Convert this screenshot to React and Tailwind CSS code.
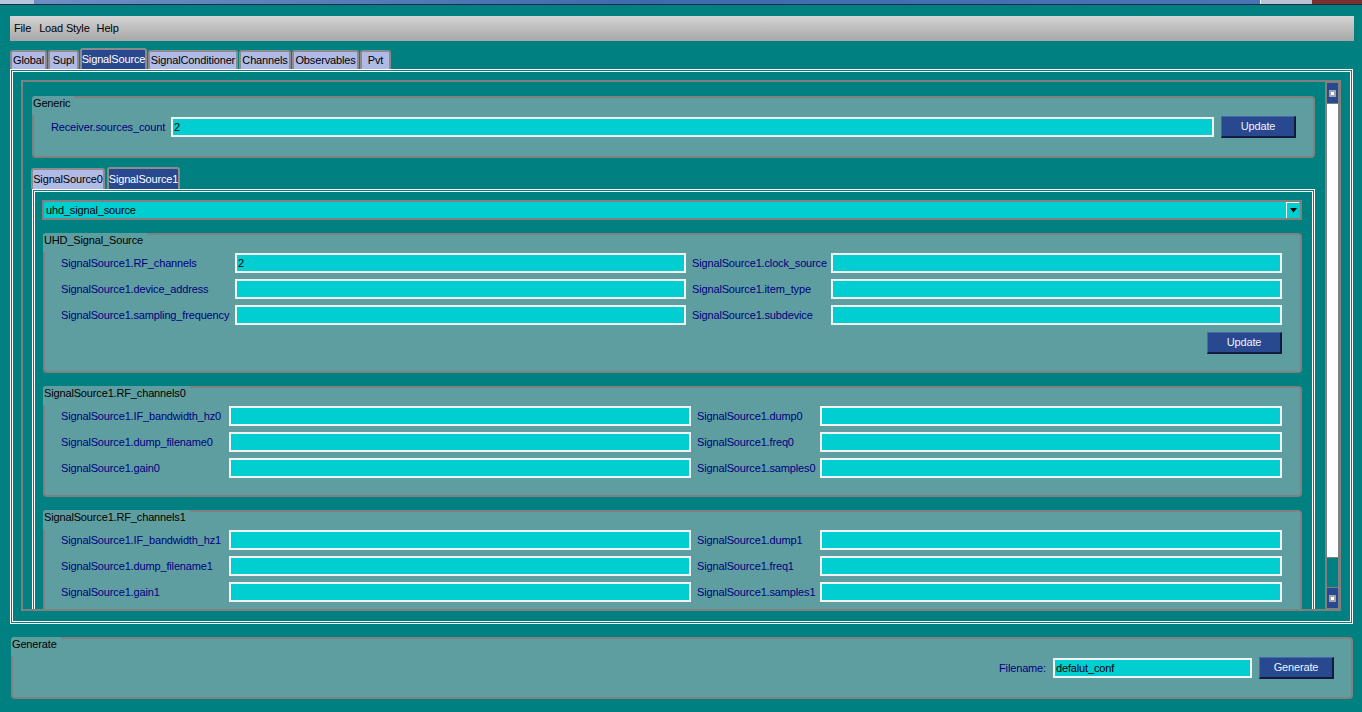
import React from "react";

function Field({ value, className = "" }) {
  return (
    <div
      className={`h-[20px] bg-[#00ced1] border-2 border-[#f2f2f2] text-black pl-[1px] flex items-center whitespace-nowrap overflow-hidden ${className}`}
    >
      {value}
    </div>
  );
}

function Btn({ children, className = "" }) {
  return (
    <div
      className={`w-[75px] h-[22px] shrink-0 flex items-center justify-center bg-[#28488f] text-[#eef2ff] border border-t-[#4a68ad] border-l-[#4a68ad] border-r-2 border-b-2 border-r-[#111c3c] border-b-[#111c3c] ${className}`}
    >
      {children}
    </div>
  );
}

function Group({ title, className = "", children }) {
  return (
    <div
      className={`relative bg-[#5f9ea0] border-2 border-[#808080] rounded-[4px] ${className}`}
    >
      <div className="absolute left-[-2px] top-[-2px] h-[19px] pl-[1px] pr-[4px] pt-[1px] leading-[13px] bg-[#5f9ea0] text-black whitespace-nowrap rounded-tl-[3px]">
        {title}
      </div>
      {children}
    </div>
  );
}

function Label({ children }) {
  return (
    <span className="text-[#000080] whitespace-nowrap leading-[13px]">
      {children}
    </span>
  );
}

function Tab({ label, className = "", selected }) {
  return (
    <div
      className={`${className} ${
        selected
          ? "bg-[#28488f] text-white"
          : "bg-[#b0bae6] text-black"
      } border-2 border-b-0 border-[#8c8c8c] rounded-t-[3px] flex items-center justify-center whitespace-nowrap shrink-0`}
    >
      {label}
    </div>
  );
}

function ScrollBtn() {
  return (
    <div className="h-[20px] bg-[#28488f] flex items-center justify-center shrink-0">
      <div className="w-[7px] h-[7px] border-2 border-[#a4a4a4] bg-white" />
    </div>
  );
}

function RFGroup({ n }) {
  const rows = [
    [`SignalSource1.IF_bandwidth_hz${n}`, `SignalSource1.dump${n}`],
    [`SignalSource1.dump_filename${n}`, `SignalSource1.freq${n}`],
    [`SignalSource1.gain${n}`, `SignalSource1.samples${n}`],
  ];
  return (
    <Group
      title={`SignalSource1.RF_channels${n}`}
      className="h-[111px] shrink-0 pt-[18px] pl-[16px] pr-[18px]"
    >
      <div className="grid grid-cols-[162px_1fr_117px_1fr] gap-x-[6px] gap-y-[6px] items-center">
        {rows.map(([a, b]) => (
          <React.Fragment key={a}>
            <Label>{a}</Label>
            <Field />
            <Label>{b}</Label>
            <Field />
          </React.Fragment>
        ))}
      </div>
    </Group>
  );
}

export default function App() {
  return (
    <div className="w-[1362px] h-[712px] overflow-hidden bg-[#008080] flex flex-col font-['Liberation_Sans',Arial,sans-serif] text-[11px] tracking-[-0.15px] text-black">
      {/* window title strip remnant */}
      <div className="h-[5px] shrink-0 flex border-b border-[#1b2b45]">
        <div className="w-[34px] bg-[#b7c6da]" />
        <div className="flex-1 bg-linear-to-r from-[#6f8fc4] via-[#3f6aae] to-[#4a74b6]" />
        <div className="w-[52px] bg-[#b9c3d4] border-l border-[#e8eef8]" />
        <div className="w-[50px] bg-[#7a3030]" />
      </div>

      <div className="flex flex-col pl-[10px] pr-[9px]">
        {/* menu bar */}
        <div className="mt-[11px] h-[25px] mr-[-1px] bg-linear-to-b from-[#d4d4d4] to-[#a7a7a7] flex items-center pl-[2px]">
          <span className="px-[2px]">File</span>
          <span className="px-[3px] ml-[3px]">Load Style</span>
          <span className="px-[3px] ml-[1px]">Help</span>
        </div>

        {/* main tabs */}
        <div className="mt-[7px] h-[21px] flex items-end gap-[1px]">
          <Tab label="Global" className="w-[37px] h-[19px]" />
          <Tab label="Supl" className="w-[31px] h-[19px]" />
          <Tab label="SignalSource" className="w-[67px] h-[21px]" selected />
          <Tab label="SignalConditioner" className="w-[90px] h-[19px]" />
          <Tab label="Channels" className="w-[52px] h-[19px]" />
          <Tab label="Observables" className="w-[67px] h-[19px]" />
          <Tab label="Pvt" className="w-[31px] h-[19px]" />
        </div>

        {/* tab pane */}
        <div className="h-[555px] border-[3px] border-double border-white pt-[8px] pl-[8px] pr-[9px] pb-[10px] flex">
          <div className="flex-1 border-2 border-[#808080] flex overflow-hidden">
            {/* viewport */}
            <div className="flex-1 overflow-hidden pl-[9px] pt-[14px] pr-[10px] flex flex-col">
              <Group
                title="Generic"
                className="h-[62px] shrink-0 flex items-center pl-[17px] pr-[17px]"
              >
                <Label>Receiver.sources_count</Label>
                <Field value="2" className="flex-1 ml-[6px]" />
                <Btn className="ml-[7px]">Update</Btn>
              </Group>

              {/* inner tabs */}
              <div className="mt-[9px] h-[22px] flex items-end gap-[2px] ml-[-1px] shrink-0">
                <Tab label="SignalSource0" className="w-[74px] h-[21px]" />
                <Tab label="SignalSource1" className="w-[73px] h-[22px]" selected />
              </div>

              <div className="flex-1 border-[3px] border-b-0 border-double border-white pt-[8px] pl-[7px] pr-[10px] flex flex-col">
                {/* combo */}
                <div className="h-[20px] shrink-0 bg-[#00ced1] border-2 border-[#808080] flex items-center pl-[2px]">
                  <span className="flex-1">uhd_signal_source</span>
                  <div className="w-[13px] h-[16px] mr-[1px] border-l border-t border-white flex items-center justify-center">
                    <svg width="7" height="5" viewBox="0 0 7 5">
                      <polygon points="0,0 7,0 3.5,4.5" fill="#000" />
                    </svg>
                  </div>
                </div>

                <Group
                  title="UHD_Signal_Source"
                  className="mt-[13px] ml-[1px] h-[140px] shrink-0 pt-[18px] pl-[16px] pr-[18px] flex flex-col"
                >
                  <div className="grid grid-cols-[168px_1fr_133px_1fr] gap-x-[6px] gap-y-[6px] items-center">
                    <Label>SignalSource1.RF_channels</Label>
                    <Field value="2" />
                    <Label>SignalSource1.clock_source</Label>
                    <Field />
                    <Label>SignalSource1.device_address</Label>
                    <Field />
                    <Label>SignalSource1.item_type</Label>
                    <Field />
                    <Label>SignalSource1.sampling_frequency</Label>
                    <Field />
                    <Label>SignalSource1.subdevice</Label>
                    <Field />
                  </div>
                  <div className="flex justify-end mt-[7px]">
                    <Btn>Update</Btn>
                  </div>
                </Group>

                <div className="mt-[13px] ml-[1px] flex flex-col gap-[13px]">
                  <RFGroup n={0} />
                  <RFGroup n={1} />
                </div>
              </div>
            </div>

            {/* scrollbar */}
            <div className="w-[14px] shrink-0 bg-[#808080] flex flex-col pl-[2px] pr-[1px] py-[1px] gap-[1px]">
              <ScrollBtn />
              <div className="h-[453px] bg-white shrink-0" />
              <div className="flex-1 bg-[#008080]" />
              <ScrollBtn />
            </div>
          </div>
        </div>

        {/* Generate group */}
        <Group
          title="Generate"
          className="mt-[13px] ml-[1px] h-[62px] flex items-center justify-end pr-[17px]"
        >
          <Label>Filename:</Label>
          <Field value="defalut_conf" className="w-[199px] ml-[7px]" />
          <Btn className="ml-[7px]">Generate</Btn>
        </Group>
      </div>
    </div>
  );
}
